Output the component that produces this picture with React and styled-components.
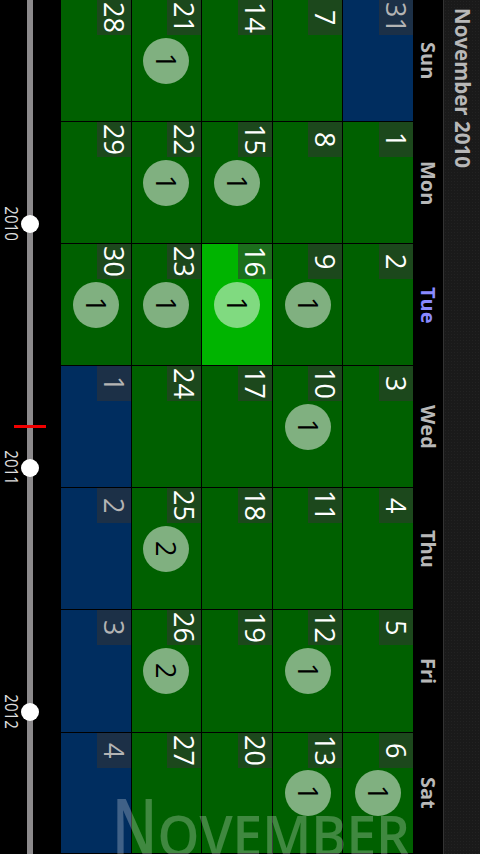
import React from "react";
import styled, { createGlobalStyle } from "styled-components";

const weekdays = ["Sun", "Mon", "Tue", "Wed", "Thu", "Fri", "Sat"];

// one entry per week, right-most column first
const weeks = [
  [[31, 0, "out"], [1], [2], [3], [4], [5], [6, 1]],
  [[7], [8], [9, 1], [10, 1], [11], [12, 1], [13, 1]],
  [[14], [15, 1], [16, 1, "today"], [17], [18], [19], [20]],
  [[21, 1], [22, 1], [23, 1], [24], [25, 2], [26, 2], [27]],
  [[28], [29], [30, 1], [1, 0, "out"], [2, 0, "out"], [3, 0, "out"], [4, 0, "out"]],
];

const years = [2010, 2011, 2012];

function App() {
  return (
    <Page>
      <GlobalStyle />
      <Title>November 2010</Title>
      <WeekdayRow>
        {weekdays.map((name) => (
          <Weekday key={name} $active={name === "Tue"}>
            {name}
          </Weekday>
        ))}
      </WeekdayRow>
      <MonthGrid>
        {weeks.map((week, w) =>
          week.map(([day, count, kind], d) => (
            <Cell key={`${w}-${d}`} $kind={kind}>
              <DayTag $muted={kind === "out"}>{day}</DayTag>
              {count > 0 && <CountBadge>{count}</CountBadge>}
            </Cell>
          ))
        )}
      </MonthGrid>
      <Timeline>
        <Track />
        <NowMarker />
        {years.map((year) => (
          <YearStop key={year}>
            <Knob />
            <YearLabel>{year}</YearLabel>
          </YearStop>
        ))}
      </Timeline>
      <Watermark>
        <BigLetter>N</BigLetter>OVEMBER
      </Watermark>
    </Page>
  );
}

// ==========================
// ==== STYLED COMPONENT ====
// ==========================
const GlobalStyle = createGlobalStyle`
  html, body {
    margin: 0;
    padding: 0;
    background: #000;
    overflow: hidden;
  }
`;

// the whole app is a landscape layout turned on its side:
// "block" runs right to left on screen, "inline" top to bottom
const Page = styled.div`
  position: relative;
  writing-mode: vertical-rl;
  display: flex;
  flex-direction: column;
  width: 480px;
  height: 854px;
  overflow: hidden;
  background: #000;
  font-family: "Open Sans", sans-serif;
`;

const Title = styled.div`
  box-sizing: border-box;
  flex: none;
  block-size: 37px;
  padding-inline-start: 8px;
  border-block-end: 1px solid #333;
  background-color: #1a1a1a;
  background-image: radial-gradient(#222 0.5px, transparent 0.6px);
  background-size: 3px 3px;
  color: #b8b8b8;
  font-size: 20.5px;
  font-weight: 700;
  line-height: 35px;
  white-space: nowrap;
`;

const WeekdayRow = styled.div`
  display: grid;
  flex: none;
  grid-template-columns: repeat(7, 122px);
  block-size: 30px;
`;

const Weekday = styled.div`
  text-align: center;
  font-size: 20px;
  font-weight: 700;
  line-height: 30px;
  color: ${(p) => (p.$active ? "#8a8aff" : "#b8b8b8")};
`;

const MonthGrid = styled.div`
  display: grid;
  flex: none;
  grid-template-columns: repeat(5, 122px) 123px 1fr;
  grid-auto-rows: 70.6px;
  block-size: 352px;
`;

const cellColors = {
  out: "#002d5f",
  today: "#00b400",
};

const Cell = styled.div`
  box-sizing: border-box;
  position: relative;
  border-block-end: 1px solid #000;
  border-inline-end: 1px solid #000;
  background: ${(p) => cellColors[p.$kind] || "#006000"};
`;

const DayTag = styled.div`
  inline-size: 35px;
  block-size: 34px;
  text-align: center;
  font-size: 27px;
  line-height: 34px;
  background: rgba(52, 52, 52, 0.54);
  color: ${(p) => (p.$muted ? "#b4b4b4" : "#fff")};
`;

const CountBadge = styled.div`
  position: absolute;
  top: 50%;
  left: 50%;
  width: 46px;
  height: 46px;
  margin: -23px 0 0 -23px;
  border-radius: 50%;
  background: rgba(255, 255, 255, 0.5);
  text-align: center;
  font-size: 27px;
  line-height: 46px;
  color: #000;
`;

const Timeline = styled.div`
  position: relative;
  display: flex;
  flex: 1;
  gap: 226px;
  padding-inline-start: 215px;
`;

const Track = styled.div`
  position: absolute;
  top: 0;
  bottom: 0;
  left: 27px;
  width: 6px;
  background: #8c8a8c;
`;

const NowMarker = styled.div`
  position: absolute;
  top: 425px;
  left: 14px;
  width: 32px;
  height: 3px;
  background: #f00000;
`;

const YearStop = styled.div`
  position: relative;
  flex: none;
  inline-size: 18px;
  padding-block-start: 22px;
`;

const Knob = styled.div`
  inline-size: 18px;
  block-size: 18px;
  border-radius: 50%;
  background: #fff;
`;

const YearLabel = styled.div`
  display: flex;
  justify-content: center;
  inline-size: 18px;
  font-size: 18px;
  line-height: 18px;
  color: #e0e0e0;
  transform: scaleY(0.84);
`;

// this one stays upright, it is painted over the grid
const Watermark = styled.div`
  position: absolute;
  left: 112px;
  bottom: -20px;
  writing-mode: horizontal-tb;
  white-space: nowrap;
  font-size: 56px;
  font-weight: 600;
  line-height: 80px;
  color: rgba(255, 255, 255, 0.25);
  transform: scaleX(0.95);
  transform-origin: left bottom;
  pointer-events: none;
`;

const BigLetter = styled.span`
  display: inline-block;
  width: 48px;
  font-size: 80px;
  transform: scaleX(0.76);
  transform-origin: left bottom;
`;

export default App;
